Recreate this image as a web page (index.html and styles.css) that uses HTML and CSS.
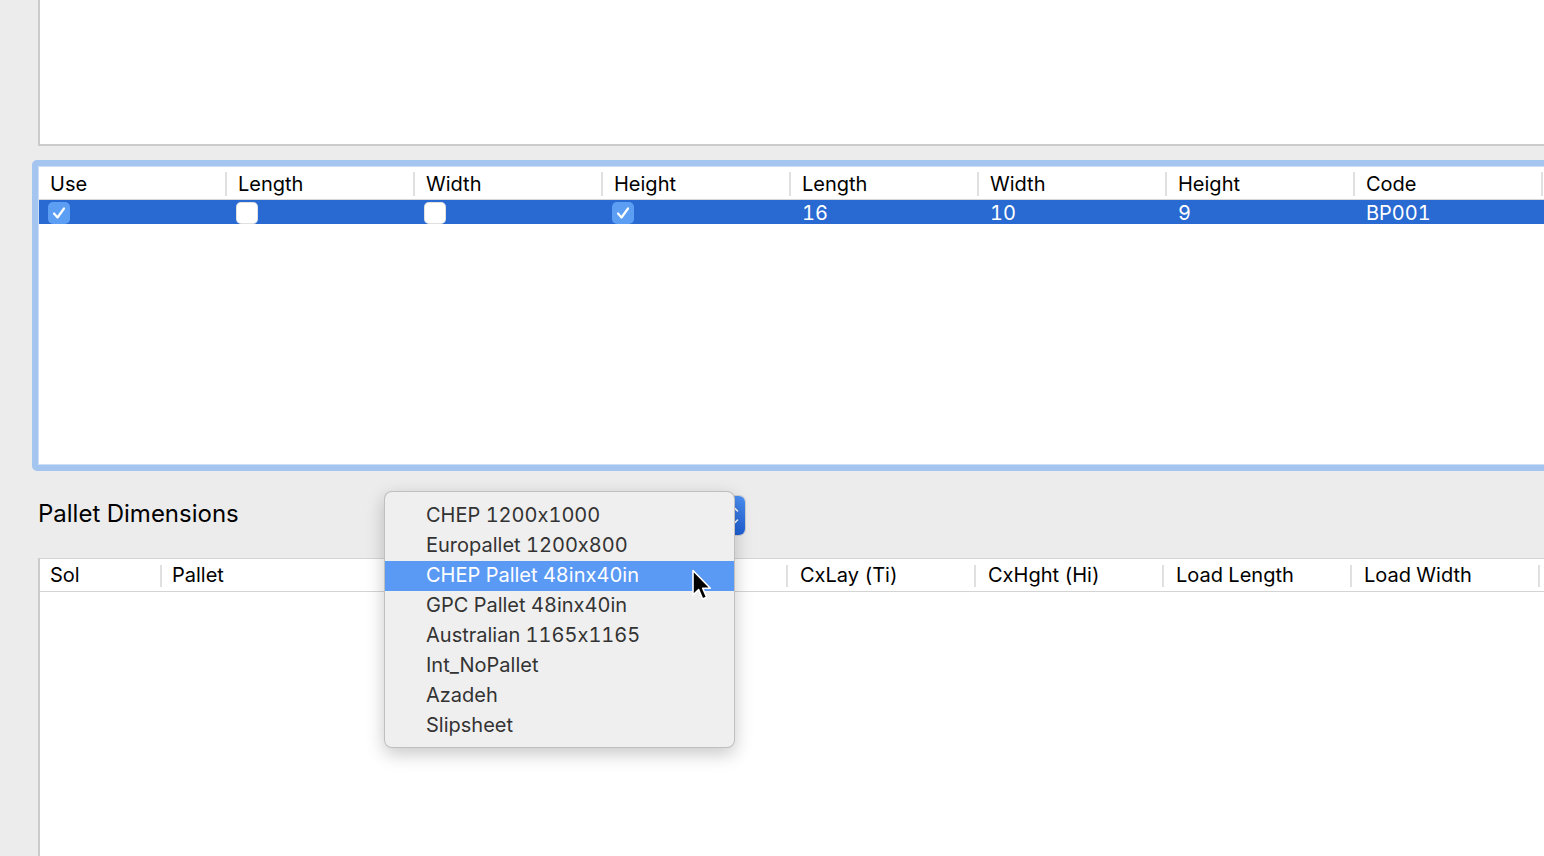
FILE: index.html
```html
<!DOCTYPE html>
<html>
<head>
<meta charset="utf-8">
<link rel="stylesheet" href="styles.css">
</head>
<body>
<div class="window">
  <div class="top-box"></div>

  <div class="ring-box">
    <div class="grid-table">
      <div class="thead">
        <div class="th">Use</div>
        <div class="th">Length</div>
        <div class="th">Width</div>
        <div class="th">Height</div>
        <div class="th">Length</div>
        <div class="th">Width</div>
        <div class="th">Height</div>
        <div class="th">Code</div>
      </div>
      <div class="tr selected">
        <div class="td"><span class="cb checked"><svg viewBox="0 0 22 22"><path d="M6 11.5 L9.5 15.5 L16 6.5" fill="none" stroke="#fff" stroke-width="2.2" stroke-linecap="round" stroke-linejoin="round"/></svg></span></div>
        <div class="td"><span class="cb"></span></div>
        <div class="td"><span class="cb"></span></div>
        <div class="td"><span class="cb checked"><svg viewBox="0 0 22 22"><path d="M6 11.5 L9.5 15.5 L16 6.5" fill="none" stroke="#fff" stroke-width="2.2" stroke-linecap="round" stroke-linejoin="round"/></svg></span></div>
        <div class="td text">16</div>
        <div class="td text">10</div>
        <div class="td text">9</div>
        <div class="td text">BP001</div>
      </div>
    </div>
  </div>

  <div class="pallet-row">
    <span class="section-label">Pallet Dimensions</span>
    <div class="popup">
      <span class="popup-body"></span>
      <span class="popup-arrows"><svg viewBox="0 0 22 39"><path d="M7.5 15 L11 11.5 L14.5 15 M7.5 24 L11 27.5 L14.5 24" fill="none" stroke="#fff" stroke-width="1.6" stroke-linecap="round" stroke-linejoin="round"/></svg></span>
    </div>
  </div>

  <div class="bottom-table">
    <div class="thead2">
      <div class="th2 w-sol">Sol</div>
      <div class="th2 w-pallet">Pallet</div>
      <div class="th2"></div>
      <div class="th2"></div>
      <div class="th2">CxLay (Ti)</div>
      <div class="th2">CxHght (Hi)</div>
      <div class="th2">Load Length</div>
      <div class="th2">Load Width</div>
      <div class="th2"></div>
    </div>
  </div>

  <div class="menu">
    <div class="mi">CHEP 1200x1000</div>
    <div class="mi">Europallet 1200x800</div>
    <div class="mi hl">CHEP Pallet 48inx40in</div>
    <div class="mi">GPC Pallet 48inx40in</div>
    <div class="mi">Australian 1165x1165</div>
    <div class="mi">Int_NoPallet</div>
    <div class="mi">Azadeh</div>
    <div class="mi">Slipsheet</div>
  </div>

  <svg class="cursor" viewBox="0 0 22 36" width="22" height="36">
    <path d="M2 1.5 L2 26 L7.6 20.6 L11.6 30 L15.6 28.3 L11.7 19.2 L19.3 19.2 Z" fill="#000" stroke="#fff" stroke-width="1.6" stroke-linejoin="round"/>
  </svg>
</div>
</body>
</html>
```

FILE: styles.css
```css
* { box-sizing: border-box; }
html, body {
  margin: 0;
  padding: 0;
  width: 1544px;
  height: 856px;
  overflow: hidden;
  background: #ececec;
  font-family: Inter, "Noto Sans", "Liberation Sans", sans-serif;
  font-feature-settings: "calt" 0;
  font-variant-numeric: tabular-nums;
  color: #000;
}
.window {
  position: relative;
  width: 1544px;
  height: 856px;
  overflow: hidden;
}
.top-box {
  margin-left: 38px;
  margin-right: -30px;
  height: 146px;
  background: #fff;
  border-left: 2px solid #cbcbcb;
  border-bottom: 2px solid #cbcbcb;
}
.ring-box {
  margin-top: 14px;
  margin-left: 32px;
  margin-right: -30px;
  height: 311px;
  border: 6px solid #a3c5ef;
  border-radius: 5px;
  background: #fff;
}
.grid-table {
  height: 100%;
  border: 1px solid #cddff6;
  background: #fff;
}
.thead {
  display: grid;
  grid-template-columns: repeat(8, 188px) 1fr;
  height: 33px;
  border-bottom: 1px solid #d8d8d8;
}
.th, .th2 {
  position: relative;
  font-size: 20px;
  white-space: nowrap;
}
.th {
  line-height: 34px;
  padding-left: 11px;
}
.th::after {
  content: "";
  position: absolute;
  right: 0;
  top: 5px;
  bottom: 5px;
  width: 2px;
  background: #e0e0e0;
}
.tr {
  display: grid;
  grid-template-columns: repeat(8, 188px) 1fr;
  height: 24px;
}
.tr.selected {
  background: #2869d2;
  color: #fff;
}
.td {
  display: flex;
  align-items: center;
  padding-left: 9px;
}
.td.text {
  padding-left: 11px;
  font-size: 20px;
  line-height: 26px;
}
.cb {
  display: inline-block;
  width: 22px;
  height: 22px;
  border-radius: 5px;
  background: #fff;
  box-shadow: inset 0 0 0 1px rgba(0,0,0,0.12);
}
.cb.checked {
  background: #5c9ef3;
  box-shadow: none;
}
.cb svg { display: block; width: 22px; height: 22px; }

.pallet-row {
  display: flex;
  align-items: center;
  margin-top: 25px;
  padding-left: 38px;
  height: 39px;
}
.section-label {
  width: 352px;
  font-size: 24px;
  line-height: 30px;
  color: #000;
  padding-bottom: 4px;
  white-space: nowrap;
}
.popup {
  display: flex;
  width: 355px;
  height: 39px;
  background: #fff;
  border-radius: 6px;
  box-shadow: 0 0 0 1px rgba(0,0,0,0.12);
  overflow: hidden;
}
.popup-body { flex: 1; }
.popup-arrows {
  width: 22px;
  background: linear-gradient(#4b8ff2, #1d60d6);
}
.popup-arrows svg { display: block; width: 22px; height: 39px; }

.bottom-table {
  margin-top: 23px;
  margin-left: 38px;
  margin-right: -30px;
  height: 400px;
  background: #fff;
  border-left: 2px solid #cbcbcb;
  border-top: 1px solid #d4d4d4;
}
.thead2 {
  display: grid;
  grid-template-columns: 122px 250px 188px 188px 188px 188px 188px 188px 1fr;
  height: 33px;
  border-bottom: 1px solid #d4d4d4;
}
.th2 { line-height: 33px; padding-left: 12px; }
.th2.w-sol, .th2.w-pallet { padding-left: 10px; }
.th2::before {
  content: "";
  position: absolute;
  left: -2px;
  top: 6px;
  bottom: 5px;
  width: 2px;
  background: #e0e0e0;
}
.th2.w-sol::before { display: none; }

.menu {
  position: absolute;
  left: 384px;
  top: 491px;
  width: 351px;
  height: 257px;
  padding-top: 9px;
  background: #efefef;
  border: 1px solid rgba(0,0,0,0.2);
  border-radius: 8px;
  box-shadow: 0 6px 18px rgba(0,0,0,0.22);
}
.mi {
  height: 30px;
  line-height: 29px;
  padding-left: 41px;
  font-size: 20px;
  color: #333;
  white-space: nowrap;
}
.mi.hl {
  background: #5b9af4;
  color: #fff;
}
.cursor {
  position: absolute;
  left: 691px;
  top: 569px;
}
```
